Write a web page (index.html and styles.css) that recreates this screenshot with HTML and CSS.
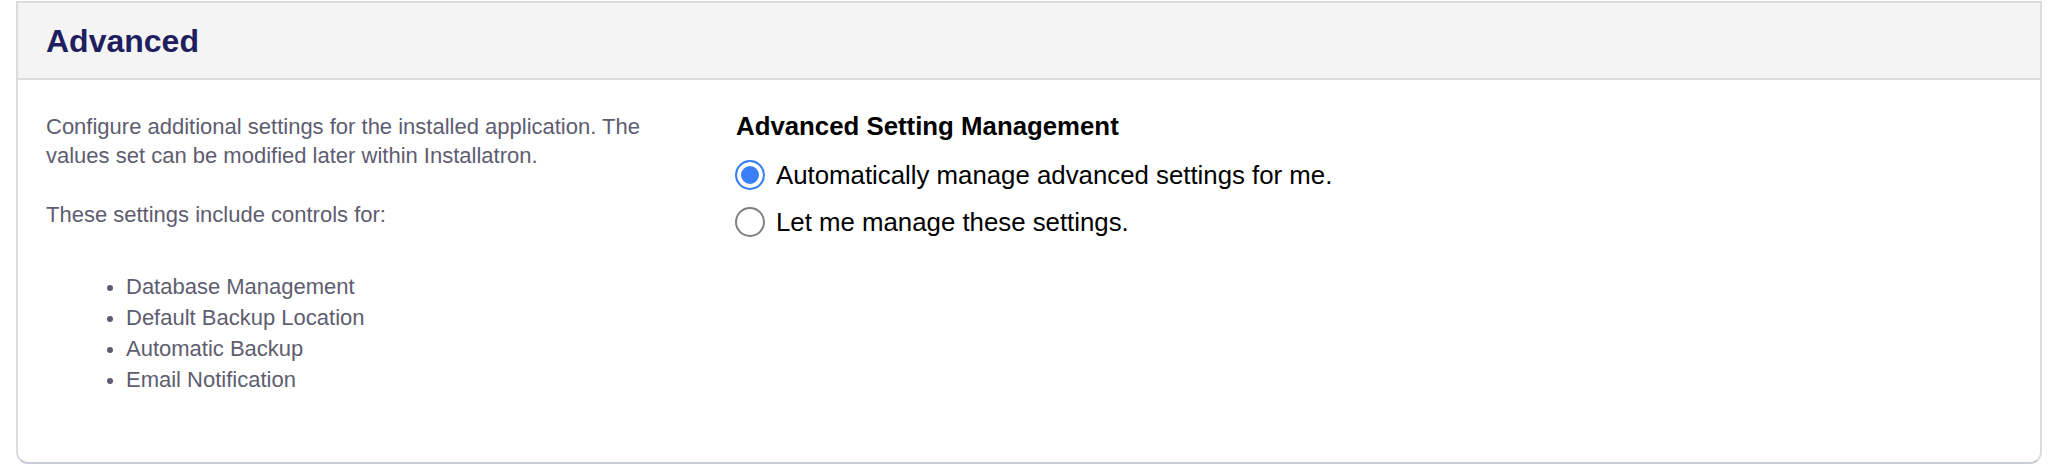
FILE: index.html
```html
<!DOCTYPE html>
<html lang="en">
<head>
<meta charset="utf-8">
<title>Advanced</title>
<link rel="stylesheet" href="styles.css">
</head>
<body>
<section class="card">
  <header class="card-header">
    <h2 class="card-title">Advanced</h2>
  </header>
  <div class="card-body">
    <div class="intro">
      <p class="intro-text">Configure additional settings for the installed application. The values set can be modified later within Installatron.</p>
      <p class="intro-text">These settings include controls for:</p>
      <ul class="feature-list">
        <li>Database Management</li>
        <li>Default Backup Location</li>
        <li>Automatic Backup</li>
        <li>Email Notification</li>
      </ul>
    </div>
    <div class="options">
      <h3 class="options-title">Advanced Setting Management</h3>
      <label class="option">
        <input class="radio" type="radio" name="adv" checked>
        <span class="option-label">Automatically manage advanced settings for me.</span>
      </label>
      <label class="option">
        <input class="radio" type="radio" name="adv">
        <span class="option-label">Let me manage these settings.</span>
      </label>
    </div>
  </div>
</section>
</body>
</html>
```
FILE: styles.css
```css
html, body {
  margin: 0;
  padding: 0;
  background: #ffffff;
}

body {
  font-family: "Liberation Sans", Arial, Helvetica, sans-serif;
  padding: 1px 16px 0;
}

.card {
  border: 2px solid #dcdcdc;
  border-bottom-color: #c8ccd8;
  border-radius: 0 0 12px 12px;
  background: #ffffff;
  height: 463px;
  box-sizing: border-box;
  display: flex;
  flex-direction: column;
}

.card-header {
  background: #f4f4f4;
  border-bottom: 2px solid #dcdcdc;
  height: 75px;
  padding: 0 28px;
  display: flex;
  align-items: center;
}

.card-title {
  margin: 1px 0 0;
  font-size: 32px;
  line-height: 37px;
  font-weight: 700;
  color: #1f1e5e;
}

.card-body {
  display: grid;
  grid-template-columns: 618px 1fr;
  column-gap: 72px;
  padding: 32px 28px 0;
}

.intro-text {
  margin: 0 0 30px;
  font-size: 22px;
  line-height: 29px;
  color: #5e5d70;
}

.intro .intro-text:nth-of-type(2) {
  margin-bottom: 0;
}

.feature-list {
  margin: 42px 0 0;
  padding: 0 0 0 80px;
  font-size: 22px;
  line-height: 31px;
  color: #5e5d70;
}

.feature-list li::marker {
  font-size: 20px;
}

.options {
  display: flex;
  flex-direction: column;
  gap: 11px;
}

.options-title {
  margin: 0 0 5px;
  font-size: 25.8px;
  line-height: 29px;
  font-weight: 700;
  color: #000000;
}

.option {
  display: flex;
  align-items: center;
  gap: 11px;
  height: 36px;
  cursor: pointer;
}

.radio {
  appearance: none;
  -webkit-appearance: none;
  margin: 0 0 0 -1px;
  width: 30px;
  height: 30px;
  border-radius: 50%;
  border: 2px solid #7f7f7f;
  background: #ffffff;
  box-sizing: border-box;
  flex: none;
}

.radio:checked {
  border: 2.5px solid #3a7ff6;
  background: #3a7ff6;
  box-shadow: inset 0 0 0 4px #ffffff;
}

.option-label {
  font-size: 25.8px;
  line-height: 36px;
  color: #000000;
}
```
